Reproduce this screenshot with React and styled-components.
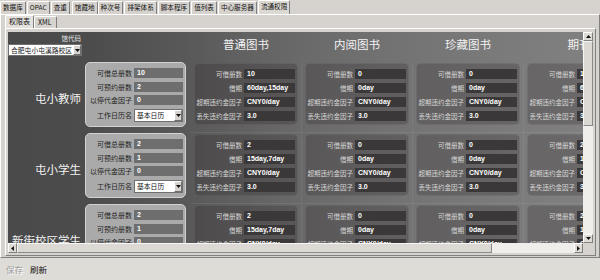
import React from 'react';
import styled, { createGlobalStyle } from 'styled-components';

const Global = createGlobalStyle`
  html, body { margin: 0; padding: 0; background: #d6d3ce; }
  body { font-family: "Noto Sans CJK SC", "Liberation Sans", sans-serif; }
`;

const CJK = `"Noto Sans CJK SC", "Liberation Sans", sans-serif`;
const LATIN = `"Liberation Sans", "Noto Sans CJK SC", sans-serif`;

const Window = styled.div`
  width: 600px;
  height: 280px;
  background: #d6d3ce;
  display: flex;
  flex-direction: column;
  overflow: hidden;
  font-family: ${CJK};
  color: #000;
`;

const TopTabs = styled.div`
  display: flex;
  align-items: flex-end;
  height: 14px;
  flex: none;
`;

const TopTab = styled.div`
  box-sizing: border-box;
  height: ${p => (p.$active ? 14 : 13)}px;
  padding: 0 2px;
  margin-right: ${p => p.$gap}px;
  border: 1px solid #fff;
  border-right-color: #808080;
  border-bottom: none;
  border-radius: 2px 2px 0 0;
  background: ${p => (p.$active ? '#dcd9d3' : '#d6d3ce')};
  font-size: 6.6px;
  line-height: 11px;
  white-space: nowrap;
  color: #111;
`;

const TabBody = styled.div`
  flex: 1;
  min-height: 0;
  display: flex;
  flex-direction: column;
  box-sizing: border-box;
  border: 1px solid #fff;
  border-right-color: #808080;
  border-bottom-color: #808080;
  padding: 0 3px 1px 4px;
`;

const SubTabs = styled.div`
  display: flex;
  align-items: flex-end;
  height: 13px;
  flex: none;
`;

const SubTab = styled.div`
  box-sizing: border-box;
  height: ${p => (p.$active ? 13 : 12)}px;
  padding: 0 3px;
  min-width: ${p => p.$w}px;
  border: 1px solid #fff;
  border-right-color: #808080;
  border-bottom: none;
  border-radius: 2px 2px 0 0;
  background: ${p => (p.$active ? '#e4e1dc' : '#d6d3ce')};
  font-size: 7px;
  line-height: 11px;
  color: #111;
  white-space: nowrap;
`;

const SubBody = styled.div`
  flex: 1;
  min-height: 0;
  box-sizing: border-box;
  border: 1px solid #fff;
  border-right-color: #808080;
  border-bottom-color: #808080;
  padding: 3px 2px 2px 2px;
  display: flex;
`;

const Frame = styled.div`
  display: grid;
  grid-template-columns: 575px 10px;
  grid-template-rows: 211px 10px;
  flex: none;
`;

const Viewport = styled.div`
  overflow: hidden;
  background: linear-gradient(90deg, #4a4a4a 0%, #4c4c4c 14%, #585858 30%, #696969 50%, #757575 72%, #808080 100%);
`;

const Grid = styled.div`
  display: grid;
  grid-template-columns: 77px 106px repeat(4, 111px);
  grid-template-rows: 30px repeat(3, 71px);
  width: max-content;
`;

const BranchCell = styled.div`
  display: flex;
  flex-direction: column;
  align-items: flex-end;
  padding-top: 2px;
  box-sizing: border-box;
`;

const SmallLabel = styled.div`
  font-size: 6.5px;
  line-height: 9px;
  color: #e2e2e2;
  padding-right: 4px;
`;

const Select = styled.div`
  align-self: flex-start;
  margin-top: ${p => p.$mt ?? 1}px;
  margin-left: ${p => p.$ml ?? 0}px;
  box-sizing: border-box;
  width: ${p => p.$w}px;
  height: ${p => p.$h}px;
  background: #fff;
  border: 1px solid #6f6f6f;
  display: flex;
  align-items: center;
  justify-content: space-between;
  font-size: 6.8px;
  color: #111;
  padding-left: 2px;
  white-space: nowrap;
  overflow: hidden;
`;

const DropBtn = styled.div`
  flex: none;
  width: 8px;
  height: 100%;
  box-sizing: border-box;
  background: #d6d3ce;
  border: 1px solid #fff;
  border-right-color: #707070;
  border-bottom-color: #707070;
  display: flex;
  align-items: center;
  justify-content: center;
`;

const ColHead = styled.div`
  font-size: 11.5px;
  line-height: 16px;
  color: #f3f3f3;
  text-align: center;
  padding: 4px 4px 0 3px;
  white-space: nowrap;
`;

const RowLabel = styled.div`
  display: flex;
  align-items: center;
  justify-content: flex-end;
  padding-right: 4px;
  font-size: 11.5px;
  color: #f3f3f3;
  white-space: nowrap;
`;

const ReaderBox = styled.div`
  box-sizing: border-box;
  width: 101px;
  height: 65px;
  background: #aaaaaa;
  border: 1px solid #d2d2d2;
  border-radius: 5px;
  padding: 5px 2px 0 2px;
  display: flex;
  flex-direction: column;
  gap: 3.5px;
`;

const Field = styled.div`
  display: flex;
  align-items: center;
  height: ${p => p.$h || 10}px;
`;

const ReaderLabel = styled.div`
  width: 45px;
  flex: none;
  text-align: right;
  padding-right: 1px;
  box-sizing: border-box;
  font-size: 7px;
  color: #1e1e1e;
  white-space: nowrap;
`;

const ReaderValue = styled.div`
  margin-left: 1px;
  width: 49px;
  height: 10px;
  background: #6e6e6e;
  color: #fff;
  font-family: ${LATIN};
  font-weight: bold;
  font-size: 7px;
  line-height: 10px;
  padding-left: 3px;
  box-sizing: border-box;
`;

const CardCell = styled.div`
  border-right: 1px solid rgba(255, 255, 255, 0.05);
  border-bottom: 1px solid rgba(255, 255, 255, 0.07);
  box-sizing: border-box;
`;

const Card = styled.div`
  box-sizing: border-box;
  margin: 1px 0 0 3px;
  width: 104px;
  height: 62px;
  border-radius: 5px;
  background: rgba(38, 28, 28, 0.24);
  border: 1px solid rgba(255, 255, 255, 0.07);
  padding: 5px 0 0 0;
  display: flex;
  flex-direction: column;
  gap: 4px;
`;

const CardLabel = styled.div`
  width: 49px;
  flex: none;
  text-align: right;
  padding-right: 2px;
  box-sizing: border-box;
  font-size: 6.5px;
  color: #d6d6d6;
  white-space: nowrap;
`;

const CardValue = styled.div`
  width: 51px;
  height: 10px;
  background: #3a3838;
  color: #fff;
  font-family: ${LATIN};
  font-weight: bold;
  font-size: 7px;
  line-height: 10px;
  padding-left: 3px;
  box-sizing: border-box;
  white-space: nowrap;
  overflow: hidden;
`;

const VScroll = styled.div`
  display: flex;
  flex-direction: column;
  background: #efeeea;
`;

const HScroll = styled.div`
  display: flex;
  background: #efeeea;
`;

const ArrowBtn = styled.div`
  flex: none;
  width: ${p => p.$w ?? 10}px;
  height: ${p => p.$h ?? 10}px;
  box-sizing: border-box;
  background: #dedbd5;
  border: 1px solid #fff;
  border-right-color: #808080;
  border-bottom-color: #808080;
  display: flex;
  align-items: center;
  justify-content: center;
`;

const Thumb = styled.div`
  flex: none;
  box-sizing: border-box;
  ${p => (p.$vertical ? `height: ${p.$len}px;` : `width: ${p.$len}px;`)}
  background: #dcd9d4;
  border: 1px solid #f6f6f4;
  border-right-color: #8a8a8a;
  border-bottom-color: #8a8a8a;
`;

const Spacer = styled.div`
  flex: 1;
`;

const Corner = styled.div`
  background: #d6d3ce;
`;

const BottomBar = styled.div`
  flex: none;
  height: 22px;
  display: flex;
  align-items: center;
  gap: 5px;
  padding-left: 5px;
  font-size: 8.5px;
  background: #dedcd7;
`;

const ToolBtn = styled.div`
  color: ${p => (p.$disabled ? '#9c9c9c' : '#111')};
  text-shadow: ${p => (p.$disabled ? '1px 1px 0 #fff' : 'none')};
  padding: 0 1px;
`;

const Tri = ({ dir }) => {
  const pts = {
    up: '0,4 3.5,0 7,4',
    down: '0,0 3.5,4 7,0',
    left: '4,0 0,3.5 4,7',
    right: '0,0 4,3.5 0,7',
  }[dir];
  const vertical = dir === 'up' || dir === 'down';
  return (
    <svg width={vertical ? 5 : 3} height={vertical ? 3 : 5} viewBox={vertical ? '0 0 7 4' : '0 0 4 7'}>
      <polygon points={pts} fill="#111" />
    </svg>
  );
};

const topTabs = [
  ['数据库', 1], ['OPAC', 1], ['查重', 2], ['馆藏地', 0], ['种次号', 1], ['排架体系', 1],
  ['脚本程序', 1], ['值列表', 1], ['中心服务器', 1], ['流通权限', 0, true],
];

const bookTypes = ['普通图书', '内阅图书', '珍藏图书', '期刊'];
const cardLabels = ['可借册数', '借期', '超期违约金因子', '丢失违约金因子'];
const readerLabels = ['可借总册数', '可预约册数', '以停代金因子'];

const teacherBooks = [
  ['10', '60day,15day', 'CNY0/day', '3.0'],
  ['0', '0day', 'CNY0/day', '3.0'],
  ['0', '0day', 'CNY0/day', '3.0'],
  ['10', '60day,15day', 'CNY0/day', '3.0'],
];
const studentBooks = [
  ['2', '15day,7day', 'CNY0/day', '3.0'],
  ['0', '0day', 'CNY0/day', '3.0'],
  ['0', '0day', 'CNY0/day', '3.0'],
  ['2', '15day,7day', 'CNY0/day', '3.0'],
];

const rows = [
  { name: '屯小教师', reader: ['10', '2', '0'], books: teacherBooks },
  { name: '屯小学生', reader: ['2', '1', '0'], books: studentBooks },
  { name: '新街校区学生', reader: ['2', '1', '0'], books: studentBooks },
];

export default function App() {
  return (
    <Window>
      <Global />
      <TopTabs>
        {topTabs.map(([t, gap, active]) => (
          <TopTab key={t} $gap={gap} $active={active}>{t}</TopTab>
        ))}
      </TopTabs>
      <TabBody>
        <SubTabs>
          <SubTab $active $w={26}>权限表</SubTab>
          <SubTab $w={23}>XML</SubTab>
        </SubTabs>
        <SubBody>
          <Frame>
            <Viewport>
              <Grid>
                <BranchCell>
                  <SmallLabel>馆代码</SmallLabel>
                  <Select $w={74} $h={12}>
                    <span>合肥屯小屯溪路校区</span>
                    <DropBtn><Tri dir="down" /></DropBtn>
                  </Select>
                </BranchCell>
                <div />
                {bookTypes.map(b => (
                  <ColHead key={b}>{b}</ColHead>
                ))}
                {rows.map(r => (
                  <React.Fragment key={r.name}>
                    <RowLabel>{r.name}</RowLabel>
                    <div>
                      <ReaderBox>
                        {readerLabels.map((l, i) => (
                          <Field key={l}>
                            <ReaderLabel>{l}</ReaderLabel>
                            <ReaderValue>{r.reader[i]}</ReaderValue>
                          </Field>
                        ))}
                        <Field $h={13}>
                          <ReaderLabel>工作日历名</ReaderLabel>
                          <Select $w={50} $h={13} $ml={1} $mt={0}>
                            <span>基本日历</span>
                            <DropBtn><Tri dir="down" /></DropBtn>
                          </Select>
                        </Field>
                      </ReaderBox>
                    </div>
                    {r.books.map((vals, ci) => (
                      <CardCell key={ci}>
                        <Card>
                          {cardLabels.map((l, i) => (
                            <Field key={l}>
                              <CardLabel>{l}</CardLabel>
                              <CardValue>{vals[i]}</CardValue>
                            </Field>
                          ))}
                        </Card>
                      </CardCell>
                    ))}
                  </React.Fragment>
                ))}
              </Grid>
            </Viewport>
            <VScroll>
              <ArrowBtn $h={9}><Tri dir="up" /></ArrowBtn>
              <Thumb $vertical $len={85} />
              <Spacer />
              <ArrowBtn $h={9}><Tri dir="down" /></ArrowBtn>
            </VScroll>
            <HScroll>
              <ArrowBtn $w={9}><Tri dir="left" /></ArrowBtn>
              <Thumb $len={475} />
              <Spacer />
              <ArrowBtn $w={9}><Tri dir="right" /></ArrowBtn>
            </HScroll>
            <Corner />
          </Frame>
        </SubBody>
      </TabBody>
      <BottomBar>
        <ToolBtn $disabled>保存</ToolBtn>
        <ToolBtn>刷新</ToolBtn>
      </BottomBar>
    </Window>
  );
}
